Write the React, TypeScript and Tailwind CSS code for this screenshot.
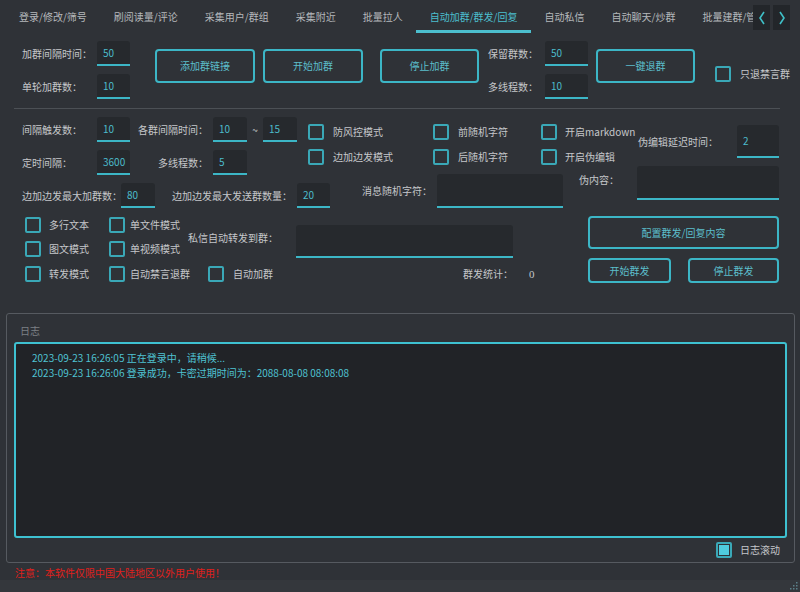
import React from 'react';

const tabs = [
  '登录/修改/筛号',
  '刷阅读量/评论',
  '采集用户/群组',
  '采集附近',
  '批量拉人',
  '自动加群/群发/回复',
  '自动私信',
  '自动聊天/炒群',
  '批量建群/管理',
];

function Label({ className = '', children }: { className?: string; children?: React.ReactNode }) {
  return <span className={`shrink-0 whitespace-nowrap text-[#c5c7ca] ${className}`}>{children}</span>;
}

function Field({ className = '', children }: { className?: string; children?: React.ReactNode }) {
  return (
    <div
      className={`flex shrink-0 items-center rounded-t-[3px] border-b-2 border-[#3cb6c6] bg-[#26292d] pl-[6px] text-[#4cbccb] ${className}`}
    >
      {children}
    </div>
  );
}

function Btn({ className = '', children }: { className?: string; children?: React.ReactNode }) {
  return (
    <div
      className={`flex shrink-0 items-center justify-center rounded-[4px] border-2 border-[#3cb6c6] text-[#5cbfcc] ${className}`}
    >
      {children}
    </div>
  );
}

function Check({ checked = false }: { checked?: boolean }) {
  return (
    <div className="flex h-[16px] w-[16px] shrink-0 items-center justify-center rounded-[2px] border-2 border-[#3aa8b7]">
      {checked && <div className="h-[10px] w-[10px] bg-[#4fcbdd]" />}
    </div>
  );
}

function CheckRow({ className = '', gap = 'ml-[9px]', children }: { className?: string; gap?: string; children?: React.ReactNode }) {
  return (
    <div className={`flex shrink-0 items-center ${className}`}>
      <Check />
      <Label className={gap}>{children}</Label>
    </div>
  );
}

function Chevron({ left }: { left?: boolean }) {
  return (
    <svg width="10" height="16" viewBox="0 0 10 16">
      <path
        d={left ? 'M7 2 L3 8 L7 14' : 'M3 2 L7 8 L3 14'}
        fill="none"
        stroke="#3fc0c8"
        strokeWidth="1.6"
      />
    </svg>
  );
}

export default function App() {
  return (
    <div className="flex h-[592px] w-[800px] flex-col overflow-hidden bg-[#2f3237] font-['Noto_Sans_CJK_SC',sans-serif] text-[10px] leading-[12px]">
      {/* Tab bar */}
      <div className="flex h-[33px] shrink-0">
        <div className="flex w-[753px] overflow-hidden pl-[5px]">
          {tabs.map((t, i) => (
            <div
              key={t}
              className={`flex h-full shrink-0 items-center whitespace-nowrap pl-[14px] pr-[13px] ${
                i === 5
                  ? 'border-b-[3px] border-[#4cbfce] pt-[3px] text-[#4cbfce]'
                  : 'text-[#b5b8bb]'
              }`}
            >
              {t}
            </div>
          ))}
        </div>
        <div className="flex gap-[3px] pt-[5px]">
          <div className="flex h-[25px] w-[17px] items-center justify-center bg-[#23262a]">
            <Chevron left />
          </div>
          <div className="flex h-[25px] w-[17px] items-center justify-center bg-[#23262a]">
            <Chevron />
          </div>
        </div>
      </div>

      {/* Join group section */}
      <div className="mt-[8px] flex items-start pl-[22px]">
        <div className="flex flex-col gap-[8px]">
          <div className="flex items-center">
            <Label className="w-[75px]">加群间隔时间：</Label>
            <Field className="h-[25px] w-[33px]">50</Field>
          </div>
          <div className="flex items-center">
            <Label className="w-[75px]">单轮加群数：</Label>
            <Field className="h-[25px] w-[33px]">10</Field>
          </div>
        </div>
        <Btn className="ml-[25px] mt-[8px] h-[34px] w-[100px]">添加群链接</Btn>
        <Btn className="ml-[8px] mt-[8px] h-[34px] w-[100px]">开始加群</Btn>
        <Btn className="ml-[17px] mt-[8px] h-[34px] w-[99px]">停止加群</Btn>
        <div className="ml-[9px] flex flex-col gap-[8px]">
          <div className="flex items-center">
            <Label className="w-[57px]">保留群数：</Label>
            <Field className="h-[25px] w-[43px]">50</Field>
          </div>
          <div className="flex items-center">
            <Label className="w-[57px]">多线程数：</Label>
            <Field className="h-[25px] w-[43px]">10</Field>
          </div>
        </div>
        <Btn className="ml-[8px] mt-[8px] h-[34px] w-[99px]">一键退群</Btn>
        <CheckRow className="ml-[20px] mt-[25px]">只退禁言群</CheckRow>
      </div>

      <div className="ml-[14px] mt-[9px] h-px w-[766px] shrink-0 bg-[#4c5055]" />

      {/* Rows 2-3 */}
      <div className="mt-[8px] flex items-start pl-[22px]">
        <div className="flex flex-col gap-[8px]">
          <div className="flex items-center">
            <Label className="w-[75px]">间隔触发数：</Label>
            <Field className="h-[25px] w-[33px]">10</Field>
            <Label className="ml-[8px] w-[75px]">各群间隔时间：</Label>
            <Field className="h-[25px] w-[34px]">10</Field>
            <Label className="w-[16px] text-center">~</Label>
            <Field className="h-[25px] w-[34px]">15</Field>
          </div>
          <div className="flex items-center">
            <Label className="w-[75px]">定时间隔：</Label>
            <Field className="h-[25px] w-[33px]">3600</Field>
            <Label className="ml-[28px] w-[55px]">多线程数：</Label>
            <Field className="h-[25px] w-[34px]">5</Field>
          </div>
        </div>
        <div className="ml-[11px] mt-[7px] flex">
          <div className="flex w-[125px] flex-col gap-[9px]">
            <CheckRow>防风控模式</CheckRow>
            <CheckRow>边加边发模式</CheckRow>
          </div>
          <div className="flex w-[108px] flex-col gap-[9px]">
            <CheckRow>前随机字符</CheckRow>
            <CheckRow>后随机字符</CheckRow>
          </div>
          <div className="flex w-[97px] flex-col gap-[9px]">
            <CheckRow gap="ml-[8px]">开启markdown</CheckRow>
            <CheckRow gap="ml-[8px]">开启伪编辑</CheckRow>
          </div>
        </div>
        <div className="mt-[8px] flex items-center">
          <Label className="w-[99px]">伪编辑延迟时间：</Label>
          <Field className="h-[33px] w-[42px]">2</Field>
        </div>
      </div>

      {/* Row 4 */}
      <div className="flex h-[33px] shrink-0 items-start pl-[22px]">
        <div className="mt-[8px] flex items-center">
          <Label className="w-[99px]">边加边发最大加群数：</Label>
          <Field className="h-[25px] w-[34px]">80</Field>
          <Label className="ml-[17px] w-[125px]">边加边发最大发送群数量：</Label>
          <Field className="h-[25px] w-[33px]">20</Field>
        </div>
        <div className="ml-[32px] -mt-[1px] flex items-center">
          <Label className="w-[75px]">消息随机字符：</Label>
          <Field className="h-[34px] w-[126px]" />
        </div>
        <div className="ml-[16px] -mt-[9px] flex items-start">
          <Label className="mt-[8px] w-[58px]">伪内容：</Label>
          <Field className="h-[34px] w-[142px]" />
        </div>
      </div>

      {/* Rows 5-7 */}
      <div className="mt-[8px] flex items-start pl-[25px]">
        <div className="mt-[1px] flex w-[563px] flex-col">
          <div className="flex h-[41px] items-start">
            <div className="flex flex-col gap-[8px]">
              <div className="flex">
                <CheckRow className="w-[84px]" gap="ml-[8px]">多行文本</CheckRow>
                <CheckRow className="w-[79px]" gap="ml-[5px]">单文件模式</CheckRow>
              </div>
              <div className="flex">
                <CheckRow className="w-[84px]" gap="ml-[8px]">图文模式</CheckRow>
                <CheckRow className="w-[79px]" gap="ml-[5px]">单视频模式</CheckRow>
              </div>
            </div>
            <Label className="mt-[15px] w-[108px]">私信自动转发到群：</Label>
            <Field className="mt-[8px] h-[33px] w-[217px]" />
          </div>
          <div className="mt-[8px] flex items-center">
            <CheckRow className="w-[84px]" gap="ml-[8px]">转发模式</CheckRow>
            <CheckRow className="w-[99px]" gap="ml-[5px]">自动禁言退群</CheckRow>
            <CheckRow className="w-[255px]">自动加群</CheckRow>
            <Label className="w-[66px]">群发统计：</Label>
            <span className="font-['Liberation_Serif',serif] text-[11px] text-[#c5c7ca]">0</span>
          </div>
        </div>
        <div className="flex w-[191px] flex-col">
          <Btn className="h-[33px] w-full">配置群发/回复内容</Btn>
          <div className="mt-[9px] flex">
            <Btn className="h-[25px] w-[83px]">开始群发</Btn>
            <Btn className="ml-[17px] h-[25px] w-[91px]">停止群发</Btn>
          </div>
        </div>
      </div>

      {/* Log group */}
      <div className="ml-[6px] mt-[30px] flex h-[250px] w-[789px] shrink-0 flex-col rounded-[3px] border border-[#565a60]">
        <div className="flex h-[28px] shrink-0 items-center pl-[13px] pt-[6px] text-[#7c8085]">日志</div>
        <div className="ml-[7px] h-[196px] w-[773px] shrink-0 rounded-[3px] border-2 border-[#3ec1d1] bg-[#212327] pl-[16px] pt-[6px] leading-[15px] text-[#4fc2d2]">
          <div>2023-09-23 16:26:05 正在登录中，请稍候...</div>
          <div>2023-09-23 16:26:06 登录成功，卡密过期时间为：2088-08-08 08:08:08</div>
        </div>
        <div className="flex flex-1 items-center justify-end pr-[14px]">
          <Check checked />
          <Label className="ml-[8px]">日志滚动</Label>
        </div>
      </div>

      <div className="mt-[4px] shrink-0 pl-[15px] leading-[12px] text-[#e0201c]">
        注意：本软件仅限中国大陆地区以外用户使用！
      </div>

      {/* Status bar */}
      <div className="mt-[1px] flex flex-1 items-end justify-end bg-[#34373c]">
        <svg width="10" height="10" viewBox="0 0 10 10" className="mb-[1px] mr-[1px]">
          <rect x="7" y="1" width="1.5" height="1.5" fill="#5a7f88" />
          <rect x="4" y="4" width="1.5" height="1.5" fill="#5a7f88" />
          <rect x="7" y="4" width="1.5" height="1.5" fill="#5a7f88" />
          <rect x="1" y="7" width="1.5" height="1.5" fill="#5a7f88" />
          <rect x="4" y="7" width="1.5" height="1.5" fill="#5a7f88" />
          <rect x="7" y="7" width="1.5" height="1.5" fill="#5a7f88" />
        </svg>
      </div>
    </div>
  );
}
